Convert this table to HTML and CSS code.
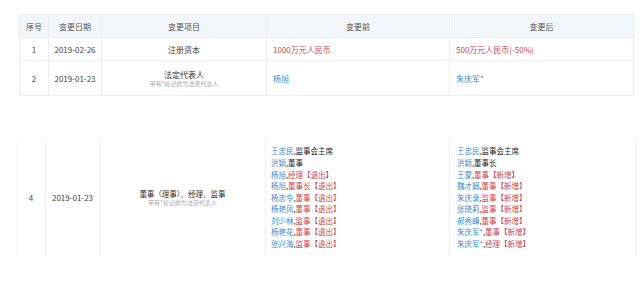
FILE: index.html
```html
<!DOCTYPE html>
<html lang="zh">
<head>
<meta charset="utf-8">
<title>变更记录</title>
<link rel="stylesheet" href="styles.css">
</head>
<body>
<div class="page">
  <table class="grid top">
    <colgroup>
      <col class="c1"><col class="c2"><col class="c3"><col class="c4"><col class="c5">
    </colgroup>
    <thead>
      <tr class="head">
        <th>序号</th><th>变更日期</th><th>变更项目</th><th>变更前</th><th>变更后</th>
      </tr>
    </thead>
    <tbody>
      <tr class="r1">
        <td class="ctr">1</td>
        <td class="ctr">2019-02-26</td>
        <td class="ctr">注册资本</td>
        <td class="val red">1000万元人民币</td>
        <td class="val red">500万元人民币(-50%)</td>
      </tr>
      <tr class="r2">
        <td class="ctr">2</td>
        <td class="ctr">2019-01-23</td>
        <td class="ctr"><div class="item">法定代表人</div><div class="note">带有*标记的为法定代表人</div></td>
        <td class="val blue">杨旭</td>
        <td class="val blue">朱庆军*</td>
      </tr>
    </tbody>
  </table>

  <table class="grid bottom">
    <colgroup>
      <col class="d1"><col class="d2"><col class="d3"><col class="d4"><col class="d5">
    </colgroup>
    <tbody>
      <tr class="r4">
        <td class="ctr">4</td>
        <td class="ctr">2019-01-23</td>
        <td class="ctr"><div class="item">董事（理事）、经理、监事</div><div class="note">带有*标记的为法定代表人</div></td>
        <td class="list first">
          <div><span class="blue">王忠民</span>,监事会主席</div>
          <div><span class="blue">洪颖</span>,董事</div>
          <div><span class="blue">杨旭</span>,<span class="red">经理【退出】</span></div>
          <div><span class="blue">杨旭</span>,<span class="red">董事长【退出】</span></div>
          <div><span class="blue">杨忠令</span>,<span class="red">董事【退出】</span></div>
          <div><span class="blue">杨艳凤</span>,<span class="red">董事【退出】</span></div>
          <div><span class="blue">刘少林</span>,<span class="red">监事【退出】</span></div>
          <div><span class="blue">杨艳花</span>,<span class="red">董事【退出】</span></div>
          <div><span class="blue">张兴海</span>,<span class="red">监事【退出】</span></div>
        </td>
        <td class="list second">
          <div><span class="blue">王忠民</span>,监事会主席</div>
          <div><span class="blue">洪颖</span>,董事长</div>
          <div><span class="blue">王蒙</span>,<span class="red">董事【新增】</span></div>
          <div><span class="blue">魏才娟</span>,<span class="red">董事【新增】</span></div>
          <div><span class="blue">朱庆录</span>,<span class="red">监事【新增】</span></div>
          <div><span class="blue">张晓莉</span>,<span class="red">监事【新增】</span></div>
          <div><span class="blue">郝秀峰</span>,<span class="red">董事【新增】</span></div>
          <div><span class="blue">朱庆军*</span>,<span class="red">董事【新增】</span></div>
          <div><span class="blue">朱庆军*</span>,<span class="red">经理【新增】</span></div>
        </td>
      </tr>
    </tbody>
  </table>
</div>
</body>
</html>
```

FILE: styles.css
```css
html, body {
  margin: 0;
  padding: 0;
  background: #ffffff;
}

body {
  font-family: "Noto Sans CJK SC", "Noto Sans", sans-serif;
  font-size: 8px;
  color: #444444;
}

.page {
  width: 640px;
  height: 286px;
  padding-top: 14px;
  box-sizing: border-box;
}

.grid {
  border-collapse: collapse;
  table-layout: fixed;
}

.grid th,
.grid td {
  border: 1px solid #eceef1;
  padding: 0;
  font-weight: normal;
  vertical-align: middle;
}

.top {
  margin-left: 19px;
  width: 614px;
}

.top .c1 { width: 29px; }
.top .c2 { width: 53px; }
.top .c3 { width: 165px; }
.top .c4 { width: 183px; }
.top .c5 { width: 184px; }

.head th {
  background: #f1f7fb;
  color: #555555;
  height: 22px;
  text-align: center;
}

.r1 td { height: 22px; }
.r2 td { height: 34px; }

.ctr { text-align: center; color: #444444; }

.val { padding-left: 6px !important; }

.item {
  line-height: 11px;
  color: #333333;
}

.note {
  font-size: 6px;
  line-height: 8px;
  color: #a8a8a8;
}

.red { color: #c6474f; }
.blue { color: #3d8bcf; }

.bottom {
  margin-top: 43px;
  margin-left: 16px;
  width: 619px;
}

.bottom .d1 { width: 29px; }
.bottom .d2 { width: 54px; }
.bottom .d3 { width: 166px; }
.bottom .d4 { width: 184px; }
.bottom .d5 { width: 186px; }

.bottom td {
  border-top: none;
  border-bottom: none;
  height: 117px;
}

.bottom td:first-child { border-left-color: #f6f7f8; }

.bottom .item { font-size: 7.5px; }

.list {
  font-size: 7.5px;
  line-height: 11.6px;
  color: #2a2a2a;
  vertical-align: middle;
}

.list.first { padding-left: 5px !important; }
.list.second { padding-left: 7px !important; }
```
